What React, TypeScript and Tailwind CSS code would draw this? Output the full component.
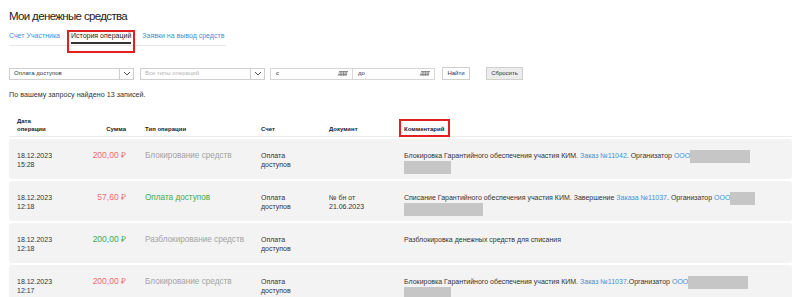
import * as React from "react";

type Row = {
    date: string;
    time: string;
    amount: string;
    amountColor: string;
    type: string;
    typeColor: string;
    doc?: [string, string];
    comment: React.ReactNode;
};

function Redacted({ w }: { w: number }) {
    return (
        <span
            className="inline-block h-[13px] -my-[2px] align-middle bg-[#c6c6c6]"
            style={{ width: w }}
        />
    );
}

function Link({ children }: { children: React.ReactNode }) {
    return <span className="text-[#3f8fd6]">{children}</span>;
}

const rows: Row[] = [
    {
        date: "18.12.2023",
        time: "15:28",
        amount: "200,00 ₽",
        amountColor: "text-[#f26a6a]",
        type: "Блокирование средств",
        typeColor: "text-[#a3a3a3]",
        comment: (
            <>
                Блокировка Гарантийного обеспечения участия КИМ. <Link>Заказ №11042</Link>. Организатор <Link>ООО</Link>
                <Redacted w={60} />
                <br />
                <Redacted w={47} />
            </>
        ),
    },
    {
        date: "18.12.2023",
        time: "12:18",
        amount: "57,60 ₽",
        amountColor: "text-[#f26a6a]",
        type: "Оплата доступов",
        typeColor: "text-[#3fa94d]",
        doc: ["№ бн от", "21.06.2023"],
        comment: (
            <>
                Списание Гарантийного обеспечения участия КИМ. Завершение <Link>Заказа №11037</Link>. Организатор <Link>ООО</Link>
                <Redacted w={25} />
                <br />
                <Redacted w={79} />
            </>
        ),
    },
    {
        date: "18.12.2023",
        time: "12:18",
        amount: "200,00 ₽",
        amountColor: "text-[#3fa94d]",
        type: "Разблокирование средств",
        typeColor: "text-[#a3a3a3]",
        comment: <>Разблокировка денежных средств для списания</>,
    },
    {
        date: "18.12.2023",
        time: "12:17",
        amount: "200,00 ₽",
        amountColor: "text-[#f26a6a]",
        type: "Блокирование средств",
        typeColor: "text-[#a3a3a3]",
        comment: (
            <>
                Блокировка Гарантийного обеспечения участия КИМ. <Link>Заказ №11037</Link>.Организатор <Link>ООО</Link>
                <Redacted w={60} />
                <br />
                <Redacted w={47} />
            </>
        ),
    },
];

function Chevron() {
    return (
        <svg width="8" height="5" viewBox="0 0 8 5" fill="none">
            <path d="M1 1l3 3 3-3" stroke="#555" strokeWidth="1" />
        </svg>
    );
}

function CalendarIcon() {
    return (
        <svg width="11" height="5" viewBox="0 0 11 5" fill="none">
            <path d="M2 0.5h9M1.5 2h9M1 3.5h9M0.5 5h9" stroke="#777" strokeWidth="0.8" />
            <path d="M4 0v5M6.5 0v5M9 0v5" stroke="#777" strokeWidth="0.6" />
        </svg>
    );
}

function Select({ value, placeholder }: { value?: string; placeholder?: string }) {
    return (
        <div className="flex h-[12px] w-[125px] border border-[#cfcfcf] bg-white">
            <div className={"flex-1 flex items-center pl-[4px] text-[6px] " + (value ? "text-[#333]" : "text-[#b5b5b5]")}>
                {value || placeholder}
            </div>
            <div className="w-[14px] flex items-center justify-center border-l border-[#cfcfcf]">
                <Chevron />
            </div>
        </div>
    );
}

function DateInput({ label }: { label: string }) {
    return (
        <div className="flex items-center justify-between h-[12px] w-[83px] border border-[#d6d6d6] bg-white pl-[5px] pr-[4px] text-[6px] text-[#333]">
            <span>{label}</span>
            <CalendarIcon />
        </div>
    );
}

export default function App() {
    return (
        <div
            className="w-[800px] h-[297px] overflow-hidden bg-white text-[#222] pl-[9px] pr-[8px]"
            style={{ fontFamily: '"Liberation Sans", Arial, sans-serif' }}
        >
            <h1 className="pt-[7px] text-[11.5px] tracking-[-0.65px] leading-[18px] text-[#222]">
                Мои денежные средства
            </h1>

            <div className="mt-[6px] flex w-[217px] gap-[11px] whitespace-nowrap border-b border-[#e6e6e6] pb-[1px] text-[7px] leading-[10px]">
                <span className="text-[#3f8fd6]">Счет Участника</span>
                <span className="relative">
                    <span className="block border-b-2 border-[#333] pb-[1px] text-[#222]">История операций</span>
                    <span className="absolute -left-[4px] -right-[4px] -top-[1px] -bottom-[9px] border-2 border-[#e3201f]" />
                </span>
                <span className="text-[#3f8fd6]">Заявки на вывод средств</span>
            </div>

            <div className="mt-[21px] flex items-center">
                <Select value="Оплата доступов" />
                <div className="ml-[6px]">
                    <Select placeholder="Все типы операций" />
                </div>
                <div className="ml-[5px] flex">
                    <DateInput label="с" />
                    <div className="-ml-px">
                        <DateInput label="до" />
                    </div>
                </div>
                <button className="ml-[7px] h-[13px] w-[28px] border border-[#cfcfcf] bg-white text-[6px] text-[#333]">
                    Найти
                </button>
                <button className="ml-[16px] h-[13px] w-[37px] border border-[#cfcfcf] bg-[#ececec] text-[6px] text-[#333]">
                    Сбросить
                </button>
            </div>

            <p className="mt-[10px] text-[7.2px] leading-[10px] text-[#333]">По вашему запросу найдено 13 записей.</p>

            <div className="mt-[18px] grid grid-cols-[68px_68px_116px_68px_75px_1fr] items-end border-b border-[#ececec] pb-[3px] text-[6px] leading-[7.5px] font-bold text-[#222]">
                <div className="pl-[8px]">
                    Дата
                    <br />
                    операции
                </div>
                <div className="text-right pr-[19px]">Сумма</div>
                <div>Тип операции</div>
                <div>Счет</div>
                <div>Документ</div>
                <div>
                    <span className="relative inline-block">
                        Комментарий
                        <span className="absolute -left-[5px] -right-[6px] -top-[7px] -bottom-[4px] border-2 border-[#e3201f]" />
                    </span>
                </div>
            </div>

            <div className="mt-[2px] flex flex-col gap-[2px]">
                {rows.map((r, i) => (
                    <div
                        key={i}
                        className="grid h-[40px] grid-cols-[68px_68px_116px_68px_75px_361px] rounded-[3px] bg-[#f3f3f3] pt-[12px] text-[7px] leading-[9px] text-[#333]"
                    >
                        <div className="pl-[8px]">
                            {r.date}
                            <br />
                            {r.time}
                        </div>
                        <div className={"text-right pr-[19px] text-[8.5px] leading-[11px] -mt-[1px] " + r.amountColor}>{r.amount}</div>
                        <div className={"text-[8.2px] leading-[11px] -mt-[1px] " + r.typeColor}>{r.type}</div>
                        <div>
                            Оплата
                            <br />
                            доступов
                        </div>
                        <div>
                            {r.doc && (
                                <>
                                    {r.doc[0]}
                                    <br />
                                    {r.doc[1]}
                                </>
                            )}
                        </div>
                        <div className="-mt-[1px] leading-[11px]">{r.comment}</div>
                    </div>
                ))}
            </div>
        </div>
    );
}
